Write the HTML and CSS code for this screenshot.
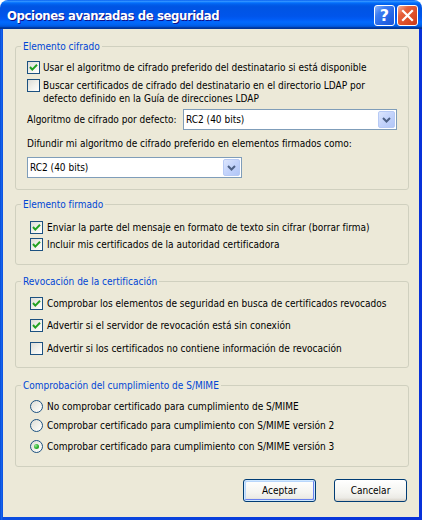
FILE: index.html
```html
<!DOCTYPE html>
<html lang="es">
<head>
<meta charset="utf-8">
<title>Opciones avanzadas de seguridad</title>
<link rel="stylesheet" href="styles.css">
</head>
<body>
<div class="window">
  <div class="titlebar">
    <span class="title">Opciones avanzadas de seguridad</span>
    <div class="tbtns">
      <span class="tbtn help">?</span>
      <span class="tbtn close"><svg width="19" height="19" viewBox="0 0 19 19"><path d="M5 5 L14 14 M14 5 L5 14" stroke="#fff" stroke-width="2.2" stroke-linecap="square"/></svg></span>
    </div>
  </div>
  <div class="frame">
    <div class="client">
      <fieldset class="group g1">
        <legend>Elemento cifrado</legend>
        <div class="body">
          <div class="row r1"><span class="cb on"><svg width="11" height="11" viewBox="0 0 11 11"><polyline points="2,5 4.3,7.6 9,2.8" fill="none" stroke="#21A121" stroke-width="2"/></svg></span><span class="txt">Usar el algoritmo de cifrado preferido del destinatario si está disponible</span></div>
          <div class="row r2"><span class="cb"></span><span class="txt wrap">Buscar certificados de cifrado del destinatario en el directorio LDAP por defecto definido en la Guía de direcciones LDAP</span></div>
          <div class="combo-row">
            <span class="lbl">Algoritmo de cifrado por defecto:</span>
            <div class="combo w1"><span class="val">RC2 (40 bits)</span><span class="dd"><svg width="9" height="6" viewBox="0 0 9 6"><path d="M1 1 L4.5 4.5 L8 1" fill="none" stroke="#4D6185" stroke-width="2"/></svg></span></div>
          </div>
          <div class="lbl2">Difundir mi algoritmo de cifrado preferido en elementos firmados como:</div>
          <div class="combo w2"><span class="val">RC2 (40 bits)</span><span class="dd"><svg width="9" height="6" viewBox="0 0 9 6"><path d="M1 1 L4.5 4.5 L8 1" fill="none" stroke="#4D6185" stroke-width="2"/></svg></span></div>
        </div>
      </fieldset>

      <fieldset class="group g2">
        <legend>Elemento firmado</legend>
        <div class="body">
          <div class="row a1"><span class="cb on"><svg width="11" height="11" viewBox="0 0 11 11"><polyline points="2,5 4.3,7.6 9,2.8" fill="none" stroke="#21A121" stroke-width="2"/></svg></span><span class="txt">Enviar la parte del mensaje en formato de texto sin cifrar (borrar firma)</span></div>
          <div class="row a2"><span class="cb on"><svg width="11" height="11" viewBox="0 0 11 11"><polyline points="2,5 4.3,7.6 9,2.8" fill="none" stroke="#21A121" stroke-width="2"/></svg></span><span class="txt">Incluir mis certificados de la autoridad certificadora</span></div>
        </div>
      </fieldset>

      <fieldset class="group g3">
        <legend>Revocación de la certificación</legend>
        <div class="body">
          <div class="row b1"><span class="cb on"><svg width="11" height="11" viewBox="0 0 11 11"><polyline points="2,5 4.3,7.6 9,2.8" fill="none" stroke="#21A121" stroke-width="2"/></svg></span><span class="txt">Comprobar los elementos de seguridad en busca de certificados revocados</span></div>
          <div class="row b2"><span class="cb on"><svg width="11" height="11" viewBox="0 0 11 11"><polyline points="2,5 4.3,7.6 9,2.8" fill="none" stroke="#21A121" stroke-width="2"/></svg></span><span class="txt">Advertir si el servidor de revocación está sin conexión</span></div>
          <div class="row b3"><span class="cb"></span><span class="txt">Advertir si los certificados no contiene información de revocación</span></div>
        </div>
      </fieldset>

      <fieldset class="group g4">
        <legend>Comprobación del cumplimiento de S/MIME</legend>
        <div class="body">
          <div class="row c1"><span class="rb"></span><span class="txt">No comprobar certificado para cumplimiento de S/MIME</span></div>
          <div class="row c2"><span class="rb"></span><span class="txt">Comprobar certificado para cumplimiento con S/MIME versión 2</span></div>
          <div class="row c3"><span class="rb on"><span class="dot"></span></span><span class="txt">Comprobar certificado para cumplimiento con S/MIME versión 3</span></div>
        </div>
      </fieldset>

      <div class="buttons">
        <button class="btn default">Aceptar</button>
        <button class="btn">Cancelar</button>
      </div>
    </div>
  </div>
</div>
</body>
</html>
```

FILE: styles.css
```css
html, body {
  margin: 0;
  padding: 0;
  background: #ffffff;
}
body {
  font-family: "DejaVu Sans Condensed", "DejaVu Sans", sans-serif;
  font-stretch: condensed;
  font-size: 10px;
  line-height: 13px;
  color: #000;
}
.window {
  width: 422px;
  height: 520px;
  display: flex;
  flex-direction: column;
  border-radius: 8px 8px 0 0;
  overflow: hidden;
}
.titlebar {
  height: 29px;
  flex: none;
  display: flex;
  align-items: center;
  justify-content: space-between;
  padding: 0 4px 0 7px;
  background: linear-gradient(to bottom, #0058EE 0%, #3593FF 4%, #288EFF 6%, #127DFF 8%, #036FFC 10%, #0262EE 14%, #0057E5 20%, #0054E3 24%, #0055EB 56%, #005BF5 66%, #026AFE 76%, #0062EF 86%, #0052D6 92%, #0040AB 94%, #003092 100%);
}
.title {
  color: #fff;
  font-family: "DejaVu Sans Condensed", "DejaVu Sans", sans-serif;
  font-stretch: condensed;
  font-weight: bold;
  font-size: 13px;
  letter-spacing: -0.4px;
  text-shadow: 1px 1px #0F1089;
  margin-top: 1px;
}
.tbtns {
  display: flex;
  gap: 2px;
  margin-top: 1px;
}
.tbtn {
  width: 21px;
  height: 21px;
  box-sizing: border-box;
  border: 1px solid #fff;
  border-radius: 3px;
  display: flex;
  align-items: center;
  justify-content: center;
}
.help {
  background: linear-gradient(135deg, #8FB4F8 0%, #3D7DF2 30%, #2262E4 70%, #1B55D8 100%);
  color: #fff;
  font-family: "DejaVu Sans", sans-serif;
  font-stretch: normal;
  font-weight: bold;
  font-size: 16px;
}
.close {
  background: linear-gradient(135deg, #F5B39C 0%, #E6603C 30%, #DA4A24 70%, #C8381A 100%);
}
.frame {
  flex: 1;
  display: flex;
  min-width: 0;
  padding: 0 3px 3px 3px;
  background: linear-gradient(to right, #0339C8 0, #166AEE 1px, #0A4DE0 3px, #0831D9 100%);
}
.client {
  flex: 1;
  min-width: 0;
  background: #ECE9D8;
  padding: 11px 10px 0 12px;
  display: flex;
  flex-direction: column;
}
.group {
  margin: 0;
  padding: 0;
  min-width: 0;
  border: 1px solid #D0D0BF;
  border-radius: 3px;
}
.group legend {
  color: #0046D5;
  padding: 0 2px;
  margin-left: 5px;
  line-height: 13px;
}
.g2 { margin-top: 8px; }
.g3 { margin-top: 10px; }
.g4 { margin-top: 11px; }

.body { padding: 0 2px 0 14px; }
.g1 .body { padding: 0 11px 11px 11px; }
.g2 .body { padding-bottom: 13px; }
.g3 .body { padding-bottom: 12px; }
.g4 .body { padding-bottom: 13px; }

.row {
  display: flex;
  align-items: flex-start;
  gap: 4px;
}
.g1 .row { gap: 3px; }
.txt { white-space: nowrap; }
.txt.wrap { white-space: normal; }
.r1 { margin-top: 8px; }
.r2 { margin-top: 5px; }
.a1 { margin-top: 10px; }
.a2 { margin-top: 4px; }
.b1 { margin-top: 9px; }
.b2 { margin-top: 9px; }
.b3 { margin-top: 10px; }
.c1 { margin-top: 8px; }
.c2 { margin-top: 6px; }
.c3 { margin-top: 8px; }

.cb {
  flex: none;
  width: 13px;
  height: 13px;
  box-sizing: border-box;
  border: 1px solid #1C5180;
  background: linear-gradient(135deg, #DCDCD7 0%, #F0F0EA 50%, #FFFFFF 100%);
  display: flex;
  align-items: center;
  justify-content: center;
}
.rb {
  flex: none;
  width: 13px;
  height: 13px;
  box-sizing: border-box;
  border: 1px solid #1C5180;
  border-radius: 50%;
  background: linear-gradient(135deg, #DCDCD7 0%, #F0F0EA 50%, #FFFFFF 100%);
  display: flex;
  align-items: center;
  justify-content: center;
}
.dot {
  width: 5px;
  height: 5px;
  border-radius: 50%;
  background: radial-gradient(circle at 35% 35%, #9AE59A 0%, #2FB52F 50%, #1A8A1A 100%);
}

.combo-row {
  margin-top: 4px;
  display: flex;
  align-items: center;
  justify-content: space-between;
}
.lbl { white-space: nowrap; flex: 1; min-width: 0; }
.lbl2 { white-space: nowrap; }
.combo {
  height: 21px;
  flex: none;
  box-sizing: border-box;
  border: 1px solid #7F9DB9;
  background: #fff;
  display: flex;
  align-items: center;
  justify-content: space-between;
  padding: 0 1px 0 2px;
}
.w1 { width: 214px; }
.w2 { width: 215px; margin-top: 7px; }
.lbl2 { margin-top: 7px; }
.dd {
  width: 17px;
  height: 17px;
  box-sizing: border-box;
  border: 1px solid #B7CAF5;
  border-radius: 2px;
  background: linear-gradient(135deg, #DCE6FD 0%, #C3D3FB 50%, #B1C6F6 100%);
  display: flex;
  align-items: center;
  justify-content: center;
}

.buttons {
  margin-top: 12px;
  display: flex;
  justify-content: flex-end;
  gap: 18px;
  padding-right: 2px;
}
.btn {
  width: 73px;
  height: 23px;
  box-sizing: border-box;
  border: 1px solid #003C74;
  border-radius: 3px;
  background: linear-gradient(to bottom, #FFFFFF 0%, #F4F4F0 60%, #ECEBE6 85%, #D6D0C5 100%);
  font-family: "DejaVu Sans Condensed", "DejaVu Sans", sans-serif;
  font-stretch: condensed;
  font-size: 10px;
  color: #000;
  padding: 0;
}
.btn.default {
  box-shadow: inset 0 0 0 1px #CEE7FF, inset -1px -1px 0 1px #6982EE, inset 1px 1px 0 1px #B8D6FB;
}
```
